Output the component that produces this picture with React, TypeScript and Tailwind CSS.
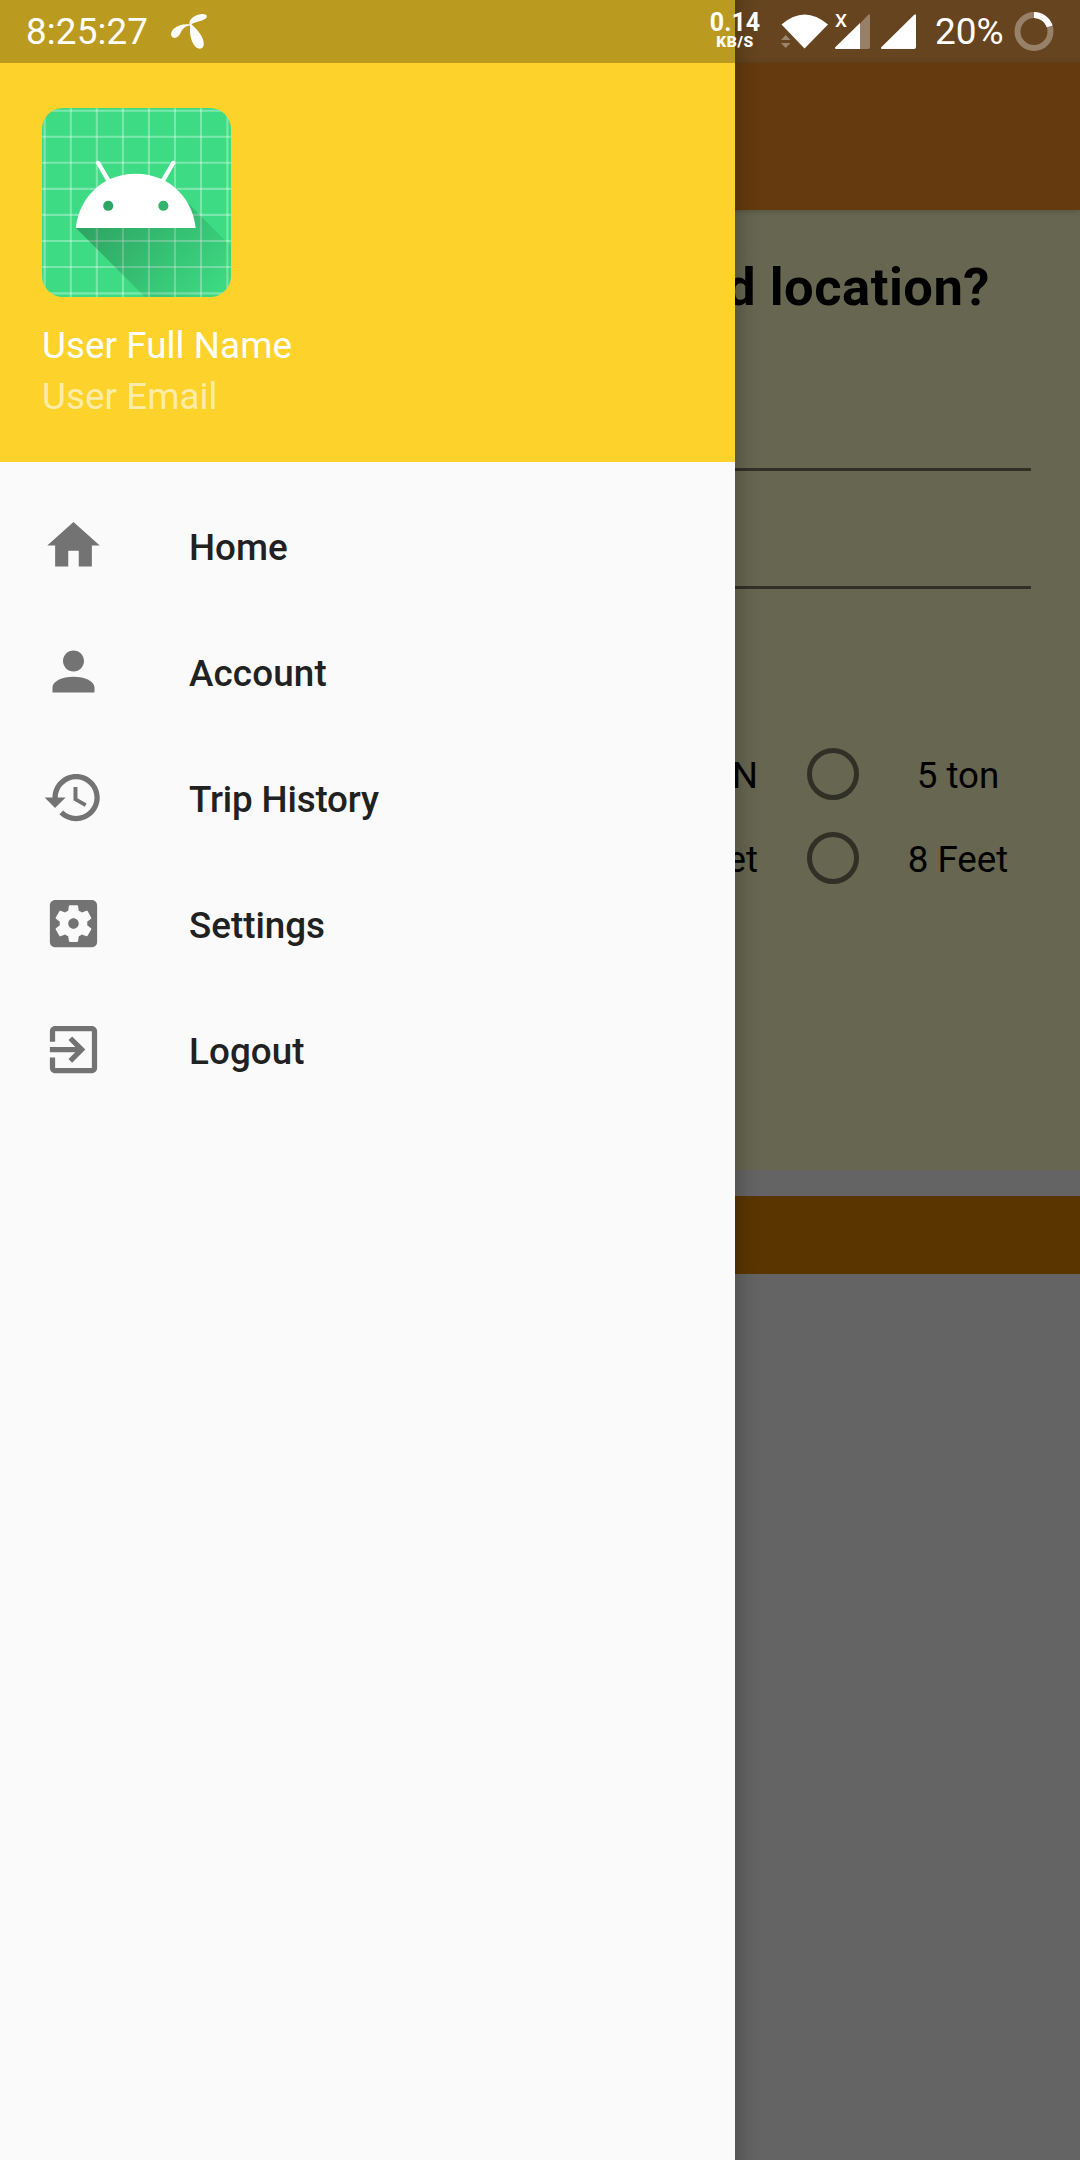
const MENU: { label: string; path: string; tracking?: string }[] = [
  { label: "Home", path: "M10 20v-6h4v6h5v-8h3L12 3 2 12h3v8z" },
  {
    label: "Account",
    tracking: "tracking-[0.15px]",
    path: "M12 12c2.21 0 4-1.79 4-4s-1.79-4-4-4-4 1.79-4 4 1.79 4 4 4zm0 2c-4.42 0-8 1.79-8 4v2h16v-2c0-2.21-3.58-4-8-4z",
  },
  {
    label: "Trip History",
    tracking: "tracking-[-0.15px]",
    path: "M13 3c-4.97 0-9 4.03-9 9H1l3.89 3.89.07.14L9 12H6c0-3.87 3.13-7 7-7s7 3.13 7 7-3.13 7-7 7c-1.93 0-3.68-.79-4.94-2.06l-1.42 1.42C8.27 19.99 10.51 21 13 21c4.97 0 9-4.03 9-9s-4.03-9-9-9zm-1 5v5l4.28 2.54.72-1.21-3.5-2.08V8H12z",
  },
  {
    label: "Settings",
    path: "M12 10c-1.1 0-2 .9-2 2s.9 2 2 2 2-.9 2-2-.9-2-2-2zm7-7H5c-1.11 0-2 .9-2 2v14c0 1.1.89 2 2 2h14c1.11 0 2-.9 2-2V5c0-1.1-.89-2-2-2zm-1.75 9c0 .23-.02.46-.05.68l1.48 1.16c.13.11.17.3.08.45l-1.4 2.42c-.09.15-.27.21-.43.15l-1.74-.7c-.36.28-.76.51-1.18.69l-.26 1.85c-.03.17-.18.3-.35.3h-2.8c-.17 0-.32-.13-.35-.29l-.26-1.85c-.43-.18-.82-.41-1.18-.69l-1.74.7c-.16.06-.34 0-.43-.15l-1.4-2.42c-.09-.15-.05-.34.08-.45l1.48-1.16c-.03-.23-.05-.46-.05-.69s.02-.46.05-.68l-1.48-1.16c-.13-.11-.17-.3-.08-.45l1.4-2.42c.09-.15.27-.21.43-.15l1.74.7c.36-.28.76-.51 1.18-.69l.26-1.85c.03-.17.18-.3.35-.3h2.8c.17 0 .32.13.35.29l.26 1.85c.43.18.82.41 1.18.69l1.74-.7c.16-.06.34 0 .43.15l1.4 2.42c.09.15.05.34-.08.45l-1.48 1.16c.03.23.05.46.05.69z",
  },
  {
    label: "Logout",
    tracking: "tracking-[0.1px]",
    path: "M10.09 15.59L11.5 17l5-5-5-5-1.41 1.41L12.67 11H3v2h9.67l-2.58 2.59zM19 3H5c-1.11 0-2 .9-2 2v4h2V5h14v14H5v-4H3v4c0 1.1.89 2 2 2h14c1.1 0 2-.9 2-2V5c0-1.1-.9-2-2-2z",
  },
];

const GRID = [2.7, 28.8, 54.8, 80.9, 106.9, 133, 159, 185.4];

function Avatar() {
  return (
    <svg className="size-[189px] rounded-[21px]" viewBox="0 0 189 189">
      <defs>
        <linearGradient id="shade" gradientUnits="userSpaceOnUse" x1="42.96" y1="49.59" x2="85.84" y2="92.45">
          <stop offset="0" stopColor="#000" stopOpacity="0.267" />
          <stop offset="1" stopColor="#000" stopOpacity="0" />
        </linearGradient>
      </defs>
      <rect width="189" height="189" fill="#3ddc84" />
      <g stroke="#fff" strokeOpacity="0.33" strokeWidth="2.1">
        {GRID.map((p) => (
          <g key={p}>
            <line x1={p} x2={p} y1="0" y2="189" />
            <line y1={p} y2={p} x1="0" x2="189" />
          </g>
        ))}
      </g>
      <g transform="translate(-46.7 -46.3) scale(2.602)">
        <path
          fill="url(#shade)"
          d="M31 63.928c0 0 6.4-11 12.1-13.1 7.2-2.6 26-1.4 26-1.4l38.1 38.1L107 108.928l-32-1z"
        />
        <path
          fill="#fff"
          fillRule="evenodd"
          d="M65.3 45.828l3.8-6.6c.2-.4.1-.9-.3-1.1-.4-.2-.9-.1-1.1.3l-3.9 6.7c-6.3-2.8-13.4-2.8-19.7 0l-3.9-6.7c-.2-.4-.7-.5-1.1-.3-.4.2-.5.7-.3 1.1l3.8 6.6C36.2 49.428 31.7 56.028 31 63.928h46c-.7-7.9-5.2-14.5-11.7-18.1zM43.4 57.328a1.95 1.95 0 1 1 0-3.9 1.95 1.95 0 0 1 0 3.9zM64.6 57.328a1.95 1.95 0 1 1 0-3.9 1.95 1.95 0 0 1 0 3.9z"
        />
      </g>
    </svg>
  );
}

function StatusBar() {
  return (
    <header className="absolute inset-x-0 top-0 flex h-[63px] items-start bg-black/26 text-white">
      <span className="ml-[26px] mt-[10px] w-[123px] text-[36.75px] leading-[44px] tracking-[0.15px]">8:25:27</span>
      <svg className="ml-[21px] mt-[12px] h-[38px] w-[38px]" viewBox="170 12 38 38" fill="#fff">
        <path d="M189.5 24.5c-1-6 7-10.500 13-10.500 5 0 5.500 3 2.500 5-3.500 2.500-9.500 2.500-13.500 5.300 5 4.700 12.300 12 12.300 19.500 0 6-5.500 6.200-9 2.200-4-5-5.500-13-4.600-20.500-5.200.5-8 3.500-9.700 7.500-1.500 3.500-5 6-7.500 4.500-3-1.800-2-6 .5-8.500 3.800-3.500 9.500-5.200 16-4.500z" />
      </svg>
      <div className="ml-[502px] mt-[12px] flex w-[50px] flex-col items-center font-bold">
        <span className="text-[25px] leading-[22px]">0.14</span>
        <span className="text-[15.5px] font-black leading-[17px] tracking-[0.6px]">KB/S</span>
      </div>
      <svg className="ml-[20px] mt-[12px] h-[40px] w-[48px]" viewBox="780 12 48 40" fill="#fff">
        <path d="M781.500 24.500Q804.500 4.500 828 24.500L804.500 48.500z" />
        <path fillOpacity="0.35" d="M781 40l4.700-5 4.700 5zM781 43h9.400l-4.700 5z" />
      </svg>
      <div className="ml-[7px] mt-[12px] flex">
        <span className="h-[18px] w-[12px] text-[19px] font-medium leading-[18px]">X</span>
        <svg className="-ml-[12px] h-[38px] w-[36px]" viewBox="835 12 36 38" fill="#fff">
          <path fillOpacity="0.32" d="M860 23.500l8-8.500q2-2 2 1v31q0 2-2 2h-8z" />
          <path d="M860 23v26h-24q-2-.5-.5-2z" />
        </svg>
      </div>
      <svg className="ml-[10px] mt-[12px] h-[38px] w-[36px]" viewBox="881 12 36 38" fill="#fff">
        <path d="M914 15q2-2 2 1v31q0 2-2 2h-32q-2-.5-.5-2z" />
      </svg>
      <span className="ml-[18px] mt-[10px] w-[70px] text-[37px] leading-[44px]">20%</span>
      <svg className="ml-[9px] mt-[12px] size-[40px]" viewBox="0 0 40 40" fill="none" strokeWidth="6">
        <circle cx="20" cy="19.500" r="16.500" stroke="#fff" strokeOpacity="0.33" />
        <path d="M20 3A16.500 16.500 0 0 1 35.700 14.400" stroke="#fff" />
      </svg>
    </header>
  );
}

function RadioRow({ before, label }: { before: string; label: string }) {
  return (
    <div className="flex h-[84px] items-center">
      <span className="w-[758px] pt-[4px] text-right">{before}</span>
      <span className="ml-[49px] size-[52px] rounded-full border-5 border-[#303027]" />
      <span className="w-[198px] pt-[4px] text-center">{label}</span>
    </div>
  );
}

function Field() {
  return <div className="mr-[49px] h-[118px] border-b-3 border-[#303027]" />;
}

export default function App() {
  return (
    <div className="relative h-[2160px] w-[1080px] overflow-hidden bg-[#646464] font-['Roboto',sans-serif]">
      <main className="flex flex-col text-[36.75px] leading-[44px] text-black">
        <div className="h-[63px] bg-[#8a5c2a]" />
        <div className="relative h-[147px] bg-[#643a0e] shadow-[0_1px_6px_rgba(0,0,0,0.2)]" />
        <section className="h-[960px] bg-[#666651]">
          <h1 className="h-[143px] pr-[90px] pt-[45px] text-right text-[52.5px] font-bold leading-[64px] tracking-[0.5px]">
            d location?
          </h1>
          <Field />
          <Field />
          <div className="pt-[143px]">
            <RadioRow before="2 TON" label="5 ton" />
            <RadioRow before="6 Feet" label="8 Feet" />
          </div>
        </section>
        <div className="mt-[26px] h-[78px] bg-[#5a3500]" />
      </main>

      <aside className="absolute inset-y-0 left-0 w-[735px] bg-[#fafafa]">
        <div className="absolute inset-y-0 left-full w-[28px] bg-linear-to-r from-black/15 via-black/4 to-transparent" />
        <div className="h-[462px] bg-[#fcd22b] pl-[42px] pt-[108px] text-[36.75px] leading-[44px] tracking-[0.08px]">
          <Avatar />
          <p className="mt-[27px] text-white">User Full Name</p>
          <p className="mt-[7px] text-white/60">User Email</p>
        </div>
        <nav className="pt-[21px]">
          {MENU.map(({ label, path, tracking }) => (
            <a key={label} className="flex h-[126px] items-center pl-[42px]">
              <svg className="mb-[1px] size-[63px] fill-[#737373]" viewBox="0 0 24 24">
                <path d={path} />
              </svg>
              <span
                className={`ml-[84px] pt-[4px] text-[36.75px] font-medium leading-[44px] text-[#212121] ${tracking ?? ""}`}
              >
                {label}
              </span>
            </a>
          ))}
        </nav>
      </aside>

      <StatusBar />
    </div>
  );
}
